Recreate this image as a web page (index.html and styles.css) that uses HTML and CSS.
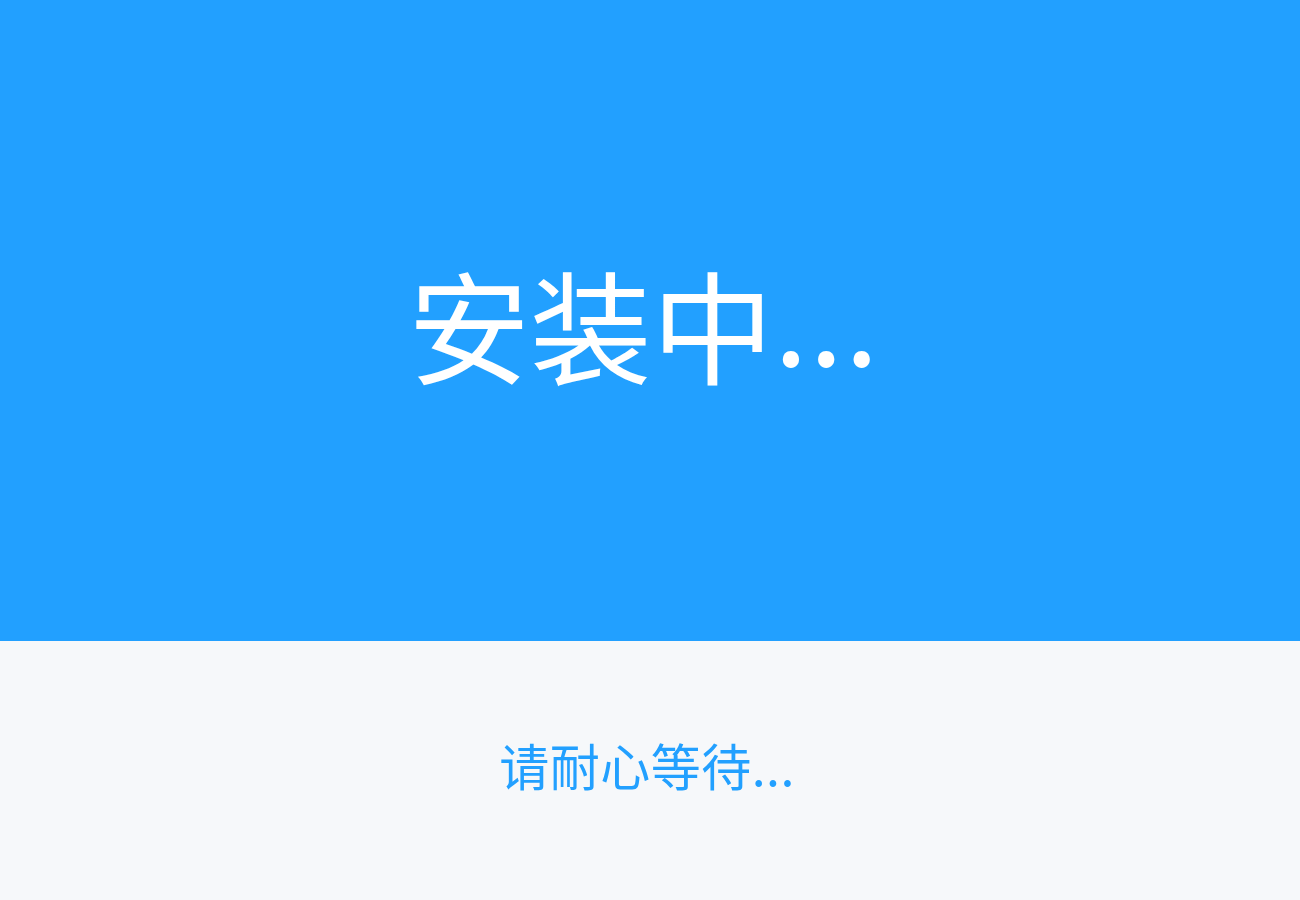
FILE: index.html
```html
<!DOCTYPE html>
<html lang="zh-CN">
<head>
<meta charset="utf-8">
<title>安装中</title>
<link rel="stylesheet" href="styles.css">
</head>
<body>
<div class="page">
  <section class="hero">
    <h1 class="title">安装中<span class="dots">...</span></h1>
  </section>
  <section class="footer">
    <p class="hint">请耐心等待...</p>
  </section>
</div>
</body>
</html>
```
FILE: styles.css
```css
html, body {
  margin: 0;
  padding: 0;
  height: 100%;
}
body {
  font-family: "Noto Sans CJK SC", "Noto Sans", sans-serif;
}
.page {
  display: flex;
  flex-direction: column;
  height: 900px;
}
.hero {
  height: 641px;
  background: #22a0ff;
  display: flex;
  align-items: center;
  justify-content: center;
}
.title {
  margin: 0;
  color: #ffffff;
  font-size: 122px;
  font-weight: 400;
  line-height: 1;
  padding-top: 2px;
  padding-right: 12px;
}
.dots {
  vertical-align: 9px;
  line-height: 0;
  letter-spacing: 1.5px;
}
.footer {
  flex: 1;
  background: #f6f8fa;
  display: flex;
  align-items: center;
  justify-content: center;
}
.hint {
  margin: 0;
  color: #22a0ff;
  font-size: 50px;
  line-height: 1;
  letter-spacing: 0.5px;
  padding-bottom: 14px;
  padding-right: 6px;
}
```
